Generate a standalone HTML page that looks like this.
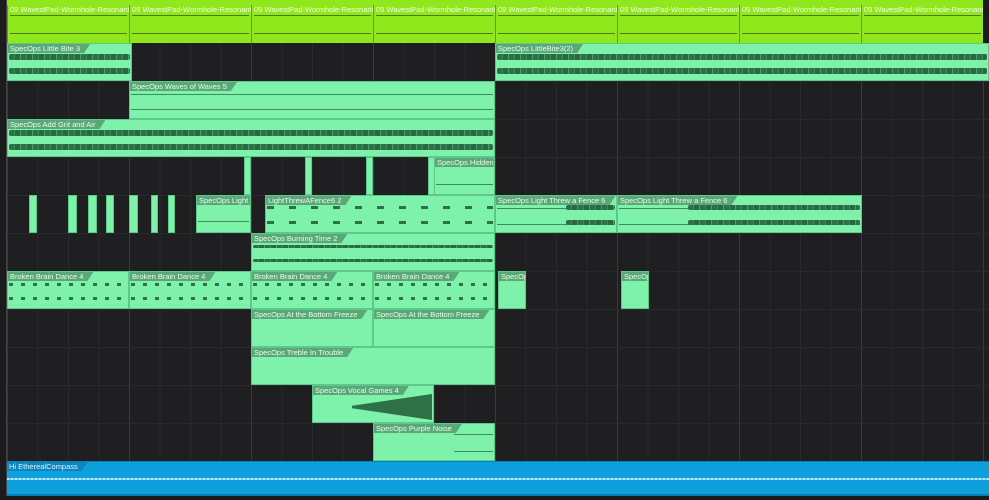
<!DOCTYPE html>
<html><head><meta charset="utf-8"><style>
*{margin:0;padding:0;box-sizing:border-box}
body{width:989px;height:500px;overflow:hidden;background:#1f1f21;position:relative;font-family:"Liberation Sans",sans-serif}
.grid{position:absolute;left:7px;top:0;width:982px;height:500px;
background:repeating-linear-gradient(90deg,#3a3a3d 0 1px,transparent 1px 122px),repeating-linear-gradient(90deg,#2a2a2d 0 1px,transparent 1px 30.5px)}
.rl{position:absolute;left:7px;width:982px;height:1px;background:#29292c}
.c{position:absolute;height:38px;background:#7ef2ab;border:1px solid #5cc98a;overflow:hidden}
.c .l{position:absolute;left:0;top:0;height:9px;padding:0 10px 0 2px;background:#5aa878;color:#e8ffe8;font-size:7.5px;line-height:9px;white-space:nowrap;clip-path:polygon(0 0,100% 0,calc(100% - 6px) 100%,0 100%)}
.c .w{position:absolute;left:1px;right:1px;height:6px;background:repeating-linear-gradient(90deg,#2e7047 0 5px,#3b8a5a 5px 6px,#2a6842 6px 11px,#4a9e6a 11px 12px);border-radius:2px}
.c .w1{top:10px}.c .w2{top:24px}
.c .d{position:absolute;left:1px;right:1px;height:3px;background:repeating-linear-gradient(90deg,#2e7047 0 4px,transparent 4px 12px)}
.c .t{position:absolute;left:1px;right:1px;height:1px;background:#3d8d5c}
.lime{position:absolute;top:5px;height:38px;background:#8fe81c;border-left:1px solid #5aa010;overflow:hidden}
.lime .l{position:absolute;left:0;top:0;height:9px;padding:0 2px;color:#f4ffe0;font-size:7.5px;line-height:9px;white-space:nowrap}
.lime .w{position:absolute;left:2px;right:2px;height:1px;background:#4d7a14}
</style></head><body>
<div class="grid"></div>
<div class="rl" style="top:81px"></div><div class="rl" style="top:119px"></div><div class="rl" style="top:157px"></div><div class="rl" style="top:195px"></div><div class="rl" style="top:233px"></div><div class="rl" style="top:271px"></div><div class="rl" style="top:309px"></div><div class="rl" style="top:347px"></div><div class="rl" style="top:385px"></div><div class="rl" style="top:423px"></div><div class="rl" style="top:461px"></div>
<div style="position:absolute;left:0;top:0;width:7px;height:500px;background:#1c1c1e;border-right:1px solid #444"></div>
<div style="position:absolute;left:7px;top:0;width:976px;height:5px;background:#8fe81c"></div>
<div style="position:absolute;left:983px;top:0;width:6px;height:43px;background:#1c1c1e"></div>

<div class="lime" style="left:7px;width:122px"><div class="l">09 WavestPad-Wormhole-ResonantSp</div><div class="w" style="top:10px"></div><div class="w" style="top:28px"></div></div>
<div class="lime" style="left:129px;width:122px"><div class="l">09 WavestPad-Wormhole-ResonantSp</div><div class="w" style="top:10px"></div><div class="w" style="top:28px"></div></div>
<div class="lime" style="left:251px;width:122px"><div class="l">09 WavestPad-Wormhole-ResonantSp</div><div class="w" style="top:10px"></div><div class="w" style="top:28px"></div></div>
<div class="lime" style="left:373px;width:122px"><div class="l">09 WavestPad-Wormhole-ResonantSp</div><div class="w" style="top:10px"></div><div class="w" style="top:28px"></div></div>
<div class="lime" style="left:495px;width:122px"><div class="l">09 WavestPad-Wormhole-ResonantSp</div><div class="w" style="top:10px"></div><div class="w" style="top:28px"></div></div>
<div class="lime" style="left:617px;width:122px"><div class="l">09 WavestPad-Wormhole-ResonantSp</div><div class="w" style="top:10px"></div><div class="w" style="top:28px"></div></div>
<div class="lime" style="left:739px;width:122px"><div class="l">09 WavestPad-Wormhole-ResonantSp</div><div class="w" style="top:10px"></div><div class="w" style="top:28px"></div></div>
<div class="lime" style="left:861px;width:122px"><div class="l">09 WavestPad-Wormhole-ResonantSp</div><div class="w" style="top:10px"></div><div class="w" style="top:28px"></div></div>

<div class="c" style="left:7px;top:43px;width:125px"><div class="l">SpecOps Little Bite 3</div><div class="w w1"></div><div class="w w2"></div></div>
<div class="c" style="left:495px;top:43px;width:494px"><div class="l">SpecOps LittleBite3(2)</div><div class="w w1"></div><div class="w w2"></div></div>
<div class="c" style="left:129px;top:81px;width:366px"><div class="l">SpecOps Waves of Waves 5</div><div class="t" style="top:12px"></div><div class="t" style="top:27px"></div></div>
<div class="c" style="left:7px;top:119px;width:488px"><div class="l">SpecOps Add Grit and Air</div><div class="w w1"></div><div class="w w2"></div></div>
<div class="c" style="left:244px;top:157px;width:7px"></div>
<div class="c" style="left:305px;top:157px;width:7px"></div>
<div class="c" style="left:366px;top:157px;width:7px"></div>
<div class="c" style="left:428px;top:157px;width:7px"></div>
<div class="c" style="left:434px;top:157px;width:61px"><div class="l">SpecOps Hidden</div><div class="t" style="top:26px"></div></div>
<div class="c" style="left:29px;top:195px;width:8px"></div>
<div class="c" style="left:68px;top:195px;width:9px"></div>
<div class="c" style="left:88px;top:195px;width:9px"></div>
<div class="c" style="left:106px;top:195px;width:8px"></div>
<div class="c" style="left:129px;top:195px;width:9px"></div>
<div class="c" style="left:151px;top:195px;width:7px"></div>
<div class="c" style="left:168px;top:195px;width:7px"></div>
<div class="c" style="left:196px;top:195px;width:55px"><div class="l">SpecOps Light T</div><div class="t" style="top:25px"></div></div>
<div class="c" style="left:265px;top:195px;width:230px"><div class="l">LightThrewAFence6 2</div><div class="d" style="top:10px;background:repeating-linear-gradient(90deg,#2e7047 0 7px,transparent 7px 22px)"></div><div class="d" style="top:25px;background:repeating-linear-gradient(90deg,#2e7047 0 7px,transparent 7px 22px)"></div></div>
<div class="c" style="left:495px;top:195px;width:122px"><div class="l">SpecOps Light Threw a Fence 6</div><div class="t" style="top:12px"></div><div class="t" style="top:28px"></div><div class="w" style="left:70px;top:9px;height:5px"></div><div class="w" style="left:70px;top:24px;height:5px"></div></div>
<div class="c" style="left:617px;top:195px;width:245px"><div class="l">SpecOps Light Threw a Fence 6</div><div class="t" style="top:12px"></div><div class="t" style="top:28px"></div><div class="w" style="left:70px;top:9px;height:5px"></div><div class="w" style="left:70px;top:24px;height:5px"></div></div>
<div class="c" style="left:251px;top:233px;width:244px"><div class="l">SpecOps Burning Time 2</div><div class="w w1" style="height:3px;top:11px"></div><div class="w w2" style="height:3px;top:25px"></div></div>
<div class="c" style="left:7px;top:271px;width:122px"><div class="l">Broken Brain Dance 4</div><div class="d" style="top:11px"></div><div class="d" style="top:25px"></div></div>
<div class="c" style="left:129px;top:271px;width:122px"><div class="l">Broken Brain Dance 4</div><div class="d" style="top:11px"></div><div class="d" style="top:25px"></div></div>
<div class="c" style="left:251px;top:271px;width:122px"><div class="l">Broken Brain Dance 4</div><div class="d" style="top:11px"></div><div class="d" style="top:25px"></div></div>
<div class="c" style="left:373px;top:271px;width:122px"><div class="l">Broken Brain Dance 4</div><div class="d" style="top:11px"></div><div class="d" style="top:25px"></div></div>
<div class="c" style="left:498px;top:271px;width:28px"><div class="l">SpecOps</div></div>
<div class="c" style="left:621px;top:271px;width:28px"><div class="l">SpecOps</div></div>
<div class="c" style="left:251px;top:309px;width:122px"><div class="l">SpecOps At the Bottom Freeze</div></div>
<div class="c" style="left:373px;top:309px;width:122px"><div class="l">SpecOps At the Bottom Freeze</div></div>
<div class="c" style="left:251px;top:347px;width:244px"><div class="l">SpecOps Treble In Trouble</div></div>
<div class="c" style="left:312px;top:385px;width:122px"><div class="l">SpecOps Vocal Games 4</div><div style="position:absolute;right:1px;top:8px;width:80px;height:26px;background:#2e7047;clip-path:polygon(0 45%,100% 0,100% 100%,0 55%)"></div></div>
<div class="c" style="left:373px;top:423px;width:122px"><div class="l">SpecOps Purple Noise</div><div class="t" style="top:10px;left:80px"></div><div class="t" style="top:27px;left:80px"></div></div>
<div style="position:absolute;left:7px;top:461px;width:982px;height:35px;background:#0ea0dc;border-top:1px solid #0a7fb0;border-bottom:2px solid #0880b5">
<div style="position:absolute;left:0;top:0;height:9px;padding:0 10px 0 2px;background:#0b86bf;color:#dff4ff;font-size:7.5px;line-height:9px;clip-path:polygon(0 0,100% 0,calc(100% - 6px) 100%,0 100%)">Hi EtherealCompass</div>
<div style="position:absolute;left:0;right:0;top:16px;height:2px;background:repeating-linear-gradient(90deg,#bfe9fb 0 2px,#6cc8ee 2px 4px)"></div>
</div>
<div style="position:absolute;left:0;top:496px;width:989px;height:4px;background:#1a1a1c"></div>
</body></html>
